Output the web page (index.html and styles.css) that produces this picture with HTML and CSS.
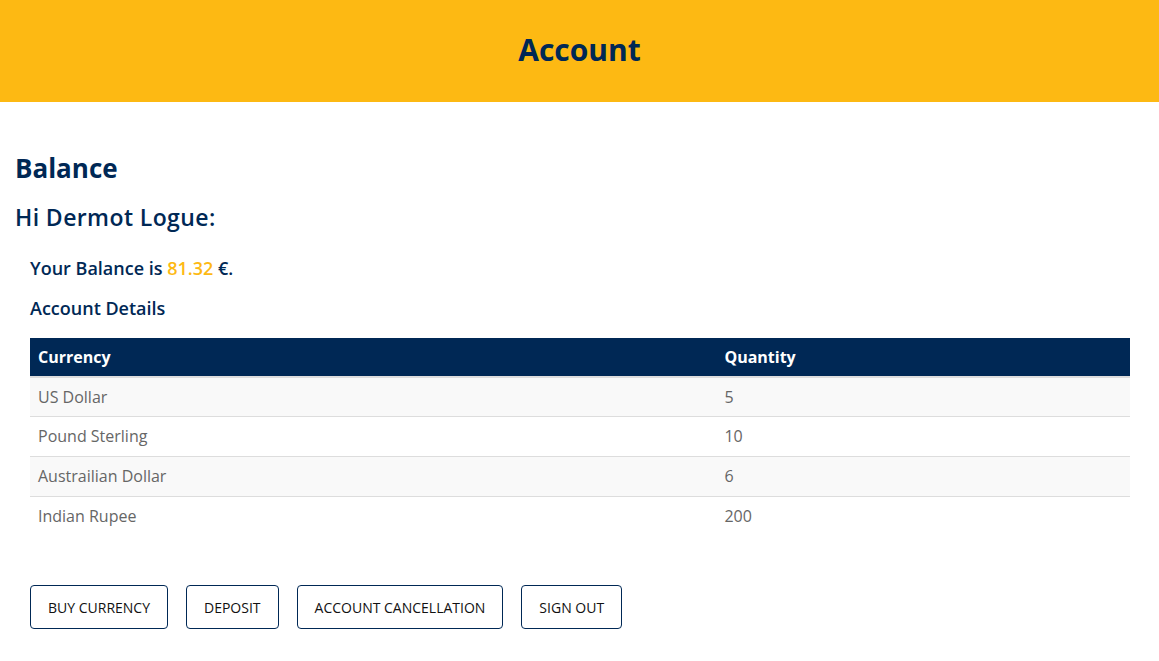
FILE: index.html
```html
<!DOCTYPE html>
<html lang="en">
<head>
<meta charset="utf-8">
<title>Account</title>
<link rel="stylesheet" href="styles.css">
</head>
<body>
<header class="topbar">
  <h1 class="topbar-title">Account</h1>
</header>
<main class="content">
  <h2 class="balance-title">Balance</h2>
  <h3 class="greeting">Hi Dermot Logue:</h3>
  <section class="details">
    <p class="balance-line">Your Balance is <span class="amount">81.32</span> €.</p>
    <p class="details-title">Account Details</p>
    <table class="currency-table">
      <thead>
        <tr><th class="col-currency">Currency</th><th>Quantity</th></tr>
      </thead>
      <tbody>
        <tr><td>US Dollar</td><td>5</td></tr>
        <tr><td>Pound Sterling</td><td>10</td></tr>
        <tr><td>Austrailian Dollar</td><td>6</td></tr>
        <tr><td>Indian Rupee</td><td>200</td></tr>
      </tbody>
    </table>
    <div class="actions">
      <button class="btn">BUY CURRENCY</button>
      <button class="btn">DEPOSIT</button>
      <button class="btn">ACCOUNT CANCELLATION</button>
      <button class="btn">SIGN OUT</button>
    </div>
  </section>
</main>
</body>
</html>
```
FILE: styles.css
```css
* { box-sizing: border-box; }
body {
  margin: 0;
  font-family: "Open Sans", "Liberation Sans", sans-serif;
  color: #002855;
  background: #fff;
}
.topbar {
  background: #fdb913;
  height: 102px;
  display: flex;
  align-items: center;
  justify-content: center;
}
.topbar-title {
  margin: 0 0 4px;
  font-size: 30px;
  font-weight: 700;
  color: #002855;
}
.content {
  padding: 45px 14px 20px 15px;
}
.balance-title {
  margin: 0;
  font-size: 26px;
  font-weight: 700;
  line-height: 42px;
}
.greeting {
  margin: 12px 0 0;
  font-size: 23px;
  font-weight: 600;
  letter-spacing: 0.4px;
  line-height: 32px;
}
.details {
  padding: 0 15px;
}
.balance-line {
  margin: 23px 0 0;
  font-size: 18px;
  font-weight: 600;
  line-height: 24px;
}
.amount { color: #fdb913; }
.details-title {
  margin: 16px 0 0;
  font-size: 18px;
  font-weight: 600;
  line-height: 24px;
}
.currency-table {
  margin-top: 18px;
  width: 100%;
  border-collapse: collapse;
  font-size: 16px;
}
.currency-table th {
  background: #002855;
  color: #fff;
  text-align: left;
  font-weight: 700;
  padding: 0 8px;
  height: 39px;
  border-bottom: 2px solid #dddddd;
}
.col-currency { width: 62.4%; }
.currency-table td {
  color: #666;
  padding: 0 8px;
  height: 40px;
  border-top: 1px solid #dddddd;
}
.currency-table tbody tr:first-child td { border-top: none; height: 39px; }
.currency-table tbody tr:nth-child(odd) td { background: #f9f9f9; }
.actions {
  display: flex;
  gap: 18px;
  margin-top: 49px;
}
.btn {
  font-family: "Open Sans", "Liberation Sans", sans-serif;
  font-size: 14px;
  color: #111;
  background: #fff;
  border: 1px solid #002855;
  border-radius: 4px;
  height: 44px;
  padding: 0 17px;
}
```
